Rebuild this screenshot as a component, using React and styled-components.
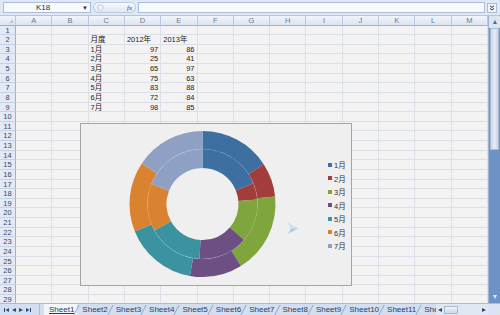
import React from "react";
import styled, { createGlobalStyle } from "styled-components";

const GlobalStyle = createGlobalStyle`
  html, body { margin: 0; padding: 0; }
  body {
    font-family: "Liberation Sans", "Noto Sans CJK SC", sans-serif;
    background: #f3f3f3;
  }
`;

const Window = styled.div`
  width: 500px;
  height: 315px;
  display: flex;
  flex-direction: column;
  overflow: hidden;
  background: #dde7f3;
`;

const FormulaBar = styled.div`
  height: 16px;
  flex: none;
  box-sizing: border-box;
  display: flex;
  align-items: center;
  gap: 2px;
  padding: 0 3px 0 3px;
  background: #dfe8f4;
  border-bottom: 1px solid #b4c6dc;
`;

const NameBox = styled.div`
  width: 88px;
  height: 11px;
  box-sizing: border-box;
  background: #f7f9fc;
  border: 1px solid #a9bdd6;
  display: flex;
  align-items: center;
  font-size: 8px;
  color: #333;
  span {
    flex: 1;
    text-align: center;
  }
  i {
    font-style: normal;
    font-size: 6px;
    width: 8px;
    color: #333;
  }
`;

const FxGroup = styled.div`
  width: 43px;
  height: 11px;
  box-sizing: border-box;
  border-radius: 6px;
  border: 1px solid #b9cbe0;
  background: linear-gradient(#f6f9fd, #dfe8f3);
  display: flex;
  align-items: center;
  justify-content: space-between;
  padding: 0 3px;
  font-family: "Liberation Serif", serif;
  font-style: italic;
  font-size: 7px;
  color: #444;
`;

const FormulaInput = styled.div`
  flex: 1;
  height: 11px;
  box-sizing: border-box;
  background: #f7f9fc;
  border: 1px solid #a9bdd6;
`;

const ExpandButton = styled.div`
  width: 10px;
  height: 10px;
  box-sizing: border-box;
  border: 1px solid #a9bdd6;
  background: #eef3f9;
  display: flex;
  align-items: center;
  justify-content: center;
`;

const Main = styled.div`
  flex: 1;
  min-height: 0;
  display: flex;
`;

const SheetArea = styled.div`
  flex: 1;
  position: relative;
  overflow: hidden;
  background: #f3f3f3;
`;

const Grid = styled.div`
  display: grid;
  grid-template-columns: 16px repeat(13, 1fr);
  grid-template-rows: 9.6px;
  grid-auto-rows: 9.63px;
`;

const ColHead = styled.div`
  box-sizing: border-box;
  background: linear-gradient(#f1f5fb, #dbe4f0);
  border-right: 1px solid #b8c9dd;
  border-bottom: 1px solid #9db3cd;
  font-size: 7.5px;
  line-height: 9px;
  text-align: center;
  color: #6b7a8e;
`;

const Corner = styled(ColHead)`
  position: relative;
  &::after {
    content: "";
    position: absolute;
    right: 2px;
    bottom: 2px;
    border-left: 4px solid transparent;
    border-bottom: 4px solid #b7c7dc;
  }
`;

const RowHead = styled.div`
  box-sizing: border-box;
  background: #e3eaf5;
  border-right: 1px solid #9db3cd;
  border-bottom: 1px solid #c4d2e4;
  font-size: 7.5px;
  line-height: 9px;
  text-align: center;
  color: #34476a;
`;

const Cell = styled.div`
  box-sizing: border-box;
  border-right: 1px solid #dcdfe7;
  border-bottom: 1px solid #dcdfe7;
  font-size: 7.5px;
  line-height: 9px;
  padding: 0 2px;
  white-space: nowrap;
  overflow: visible;
  color: #222;
  text-align: ${(p) => (p.$num ? "right" : "left")};
`;

const Chart = styled.div`
  position: absolute;
  left: 80px;
  top: 107px;
  width: 272px;
  height: 163px;
  box-sizing: border-box;
  border: 1px solid #a4a4a4;
  background: #efefef;
  display: flex;
  align-items: center;
`;

const Legend = styled.div`
  display: flex;
  flex-direction: column;
  gap: 4px;
  padding-top: 1px;
`;

const LegendItem = styled.div`
  display: flex;
  align-items: center;
  gap: 2px;
  height: 9.5px;
  font-size: 7.5px;
  color: #333;
  &::before {
    content: "";
    width: 4px;
    height: 4px;
    background: ${(p) => p.$color};
  }
`;

const Pointer = styled.svg`
  position: absolute;
  left: 207px;
  top: 99px;
`;

const VScroll = styled.div`
  width: 12px;
  flex: none;
  display: flex;
  flex-direction: column;
  background: #6f92c6;
  border-left: 1px solid #9fb5d3;
  box-sizing: border-box;
`;

const ScrollButton = styled.div`
  height: 12px;
  flex: none;
  display: flex;
  align-items: center;
  justify-content: center;
  background: ${(p) => p.$bg || "transparent"};
`;

const ScrollThumb = styled.div`
  height: 122px;
  flex: none;
  margin: 0 1px;
  background: linear-gradient(90deg, #c9d5e6, #e6ecf4, #c9d5e6);
  border: 1px solid #a8bad4;
  box-sizing: border-box;
`;

const ScrollTrack = styled.div`
  flex: 1;
`;

const TabBar = styled.div`
  height: 12px;
  flex: none;
  display: flex;
  align-items: stretch;
  background: #d3dfef;
  border-top: 1px solid #a9bcd6;
  box-sizing: border-box;
`;

const TabNav = styled.div`
  width: 40px;
  flex: none;
  display: flex;
  align-items: center;
  gap: 3px;
  padding-left: 4px;
  box-sizing: border-box;
  border-right: 1px solid #b0c2da;
`;

const TabList = styled.div`
  flex: 1;
  display: flex;
  overflow: hidden;
  padding-left: 4px;
`;

const Tab = styled.div`
  position: relative;
  flex: none;
  padding: 0 3px 0 5px;
  font-size: 8px;
  line-height: 11px;
  color: #1e3c6f;
  background: ${(p) => (p.$active ? "#f4f6f9" : "transparent")};
  text-decoration: ${(p) => (p.$active ? "underline" : "none")};
  &::after {
    content: "";
    position: absolute;
    right: 0;
    top: 1px;
    width: 1px;
    height: 10px;
    background: #8ea6c8;
    transform: skewX(-28deg);
  }
`;

const HScroll = styled.div`
  width: 52px;
  flex: none;
  display: flex;
  align-items: center;
  gap: 2px;
  padding: 0 2px;
  box-sizing: border-box;
  background: #dfe7f2;
`;

const HThumb = styled.div`
  width: 14px;
  height: 8px;
  box-sizing: border-box;
  border: 1px solid #a8bad4;
  background: linear-gradient(#eef2f8, #cdd8e7);
`;

const HTrack = styled.div`
  flex: 1;
`;

const CornerBox = styled.div`
  width: 12px;
  flex: none;
  background: #dbe4f0;
`;

const Arrow = ({ dir, color = "#2b4b7c", size = 4 }) => {
  const s = size;
  const pts = {
    up: `0,${s} ${s},${s} ${s / 2},0`,
    down: `0,0 ${s},0 ${s / 2},${s}`,
    left: `${s},0 ${s},${s} 0,${s / 2}`,
    right: `0,0 0,${s} ${s},${s / 2}`,
  }[dir];
  return (
    <svg width={s} height={s} viewBox={`0 0 ${s} ${s}`}>
      <polygon points={pts} fill={color} />
    </svg>
  );
};

const EndArrow = ({ dir }) => (
  <svg width="5" height="4" viewBox="0 0 5 4">
    {dir === "left" ? (
      <>
        <rect x="0" y="0" width="1" height="4" fill="#2b4b7c" />
        <polygon points="5,0 5,4 1.5,2" fill="#2b4b7c" />
      </>
    ) : (
      <>
        <polygon points="0,0 0,4 3.5,2" fill="#2b4b7c" />
        <rect x="4" y="0" width="1" height="4" fill="#2b4b7c" />
      </>
    )}
  </svg>
);

const COLS = ["A", "B", "C", "D", "E", "F", "G", "H", "I", "J", "K", "L", "M"];
const MONTHS = ["1月", "2月", "3月", "4月", "5月", "6月", "7月"];
const Y2012 = [97, 25, 65, 75, 83, 72, 98];
const Y2013 = [86, 41, 97, 63, 88, 84, 85];
const COLORS = ["#3e6fa1", "#a33d3c", "#7fa53d", "#6d4f83", "#3b92a1", "#d98330", "#8ea1c4"];

function cellText(row, col) {
  if (row === 2) return { 2: "月度", 3: "2012年", 4: "2013年" }[col];
  if (row >= 3 && row <= 9) {
    const i = row - 3;
    if (col === 2) return MONTHS[i];
    if (col === 3) return Y2012[i];
    if (col === 4) return Y2013[i];
  }
  return null;
}

function arcPath(cx, cy, r0, r1, a0, a1) {
  const p = (r, a) => [cx + r * Math.sin(a), cy - r * Math.cos(a)];
  const large = a1 - a0 > Math.PI ? 1 : 0;
  const [x0, y0] = p(r1, a0);
  const [x1, y1] = p(r1, a1);
  const [x2, y2] = p(r0, a1);
  const [x3, y3] = p(r0, a0);
  return `M${x0} ${y0} A${r1} ${r1} 0 ${large} 1 ${x1} ${y1} L${x2} ${y2} A${r0} ${r0} 0 ${large} 0 ${x3} ${y3} Z`;
}

function ring(values, r0, r1, cx, cy) {
  const total = values.reduce((a, b) => a + b, 0);
  let a = 0;
  return values.map((v, i) => {
    const a1 = a + (v / total) * Math.PI * 2;
    const d = arcPath(cx, cy, r0, r1, a, a1);
    a = a1;
    return <path key={i} d={d} fill={COLORS[i]} />;
  });
}

const Donut = () => {
  const cx = 121.5;
  const cy = 80;
  return (
    <svg width="247" height="161" viewBox="0 0 247 161">
      {ring(Y2012, 36, 55, cx, cy)}
      {ring(Y2013, 55, 73, cx, cy)}
      <circle cx={cx} cy={cy} r="55" fill="none" stroke="rgba(255,255,255,0.16)" strokeWidth="0.6" />
    </svg>
  );
};

const App = () => {
  const rows = [];
  for (let r = 1; r <= 30; r++) {
    rows.push(<RowHead key={`h${r}`}>{r}</RowHead>);
    COLS.forEach((c, ci) => {
      const t = cellText(r, ci);
      rows.push(
        <Cell key={`${c}${r}`} $num={typeof t === "number"}>
          {t}
        </Cell>
      );
    });
  }

  return (
    <Window>
      <GlobalStyle />
      <FormulaBar>
        <NameBox>
          <span>K18</span>
          <i>▼</i>
        </NameBox>
        <FxGroup>
          <svg width="7" height="7" viewBox="0 0 7 7">
            <circle cx="3.5" cy="3.5" r="2.8" fill="#eef3f9" stroke="#b3c3d8" strokeWidth="0.8" />
          </svg>
          <span>fx</span>
        </FxGroup>
        <FormulaInput />
        <ExpandButton>
          <svg width="6" height="6" viewBox="0 0 6 6">
            <polyline points="1,0.8 3,2.5 5,0.8" fill="none" stroke="#333" strokeWidth="1" />
            <polyline points="1,3.3 3,5 5,3.3" fill="none" stroke="#333" strokeWidth="1" />
          </svg>
        </ExpandButton>
      </FormulaBar>

      <Main>
        <SheetArea>
          <Grid>
            <Corner />
            {COLS.map((c) => (
              <ColHead key={c}>{c}</ColHead>
            ))}
            {rows}
          </Grid>
          <Chart>
            <Donut />
            <Legend>
              {MONTHS.map((m, i) => (
                <LegendItem key={m} $color={COLORS[i]}>
                  {m}
                </LegendItem>
              ))}
            </Legend>
            <Pointer width="10" height="11" viewBox="0 0 10 11">
              <polygon points="0,0 10,5.5 0,11 3,5.5" fill="#a9cdea" />
              <polygon points="0,0 10,5.5 3,5.5" fill="#cfe3f4" />
            </Pointer>
          </Chart>
        </SheetArea>
        <VScroll>
          <ScrollButton $bg="#dbe4f0">
            <Arrow dir="up" color="#4a6b9c" />
          </ScrollButton>
          <ScrollThumb />
          <ScrollTrack />
          <ScrollButton>
            <Arrow dir="down" color="#dfe7f2" />
          </ScrollButton>
        </VScroll>
      </Main>

      <TabBar>
        <TabNav>
          <EndArrow dir="left" />
          <Arrow dir="left" />
          <Arrow dir="right" />
          <EndArrow dir="right" />
        </TabNav>
        <TabList>
          {Array.from({ length: 12 }, (_, i) => (
            <Tab key={i} $active={i === 0}>
              Sheet{i + 1}
            </Tab>
          ))}
        </TabList>
        <HScroll>
          <Arrow dir="left" />
          <HThumb />
          <HTrack />
          <Arrow dir="right" />
        </HScroll>
        <CornerBox />
      </TabBar>
    </Window>
  );
};

export default App;
